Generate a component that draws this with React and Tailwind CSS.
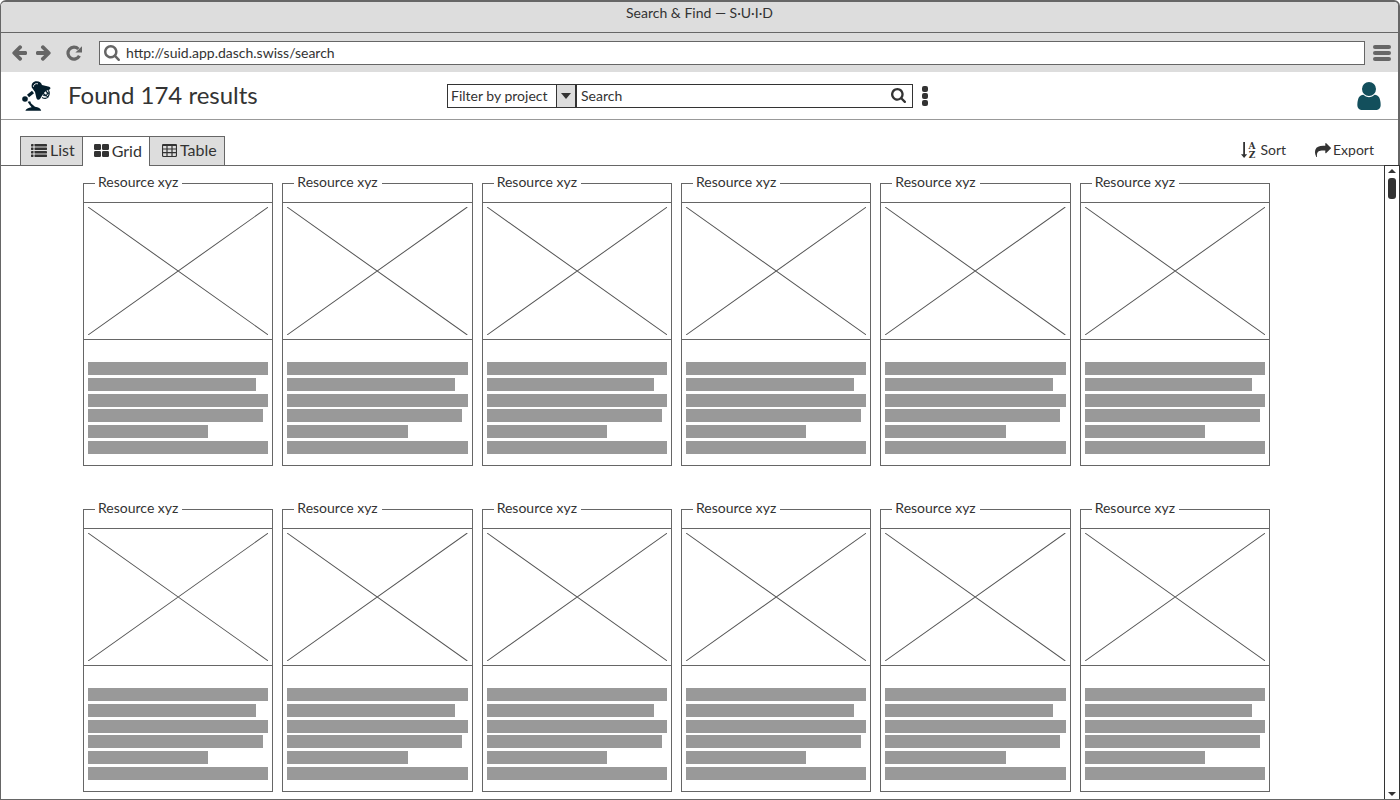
import React from "react";

const PATHS = {
  arrow:
    "M1664 896v128q0 53-32.5 90.5t-84.5 37.5h-704l293 294q38 36 38 90t-38 90l-75 76q-37 37-90 37-52 0-91-37l-651-652q-37-37-37-90 0-52 37-91l651-650q38-38 91-38 52 0 90 38l75 74q38 38 38 91t-38 91l-293 293h704q52 0 84.5 37.5t32.5 90.5z",
  search:
    "M1216 832q0-185-131.5-316.5t-316.5-131.5-316.5 131.5-131.5 316.5 131.5 316.5 316.5 131.5 316.5-131.5 131.5-316.5zm512 832q0 52-38 90t-90 38q-54 0-90-38l-343-342q-179 124-399 124-143 0-273.5-55.5t-225-150-150-225-55.5-273.5 55.5-273.5 150-225 225-150 273.5-55.5 273.5 55.5 225 150 150 225 55.5 273.5q0 220-124 399l343 343q37 37 37 90z",
  user:
    "M1536 1399q0 109-62.5 187t-150.5 78h-854q-88 0-150.5-78t-62.5-187q0-85 8.5-160.5t31.5-152 58.5-131 94-89 134.5-34.5q131 128 313 128t313-128q76 0 134.5 34.5t94 89 58.5 131 31.5 152 8.5 160.5zm-256-887q0 159-112.5 271.5t-271.5 112.5-271.5-112.5-112.5-271.5 112.5-271.5 271.5-112.5 271.5 112.5 112.5 271.5z",
  share:
    "M1792 640q0 26-19 45l-512 512q-19 19-45 19t-45-19-19-45v-256h-224q-98 0-175.5 6t-154 21.5-133 42.5-105.5 69.5-80 101-48.5 138.5-17.5 181q0 55 5 123 0 6 2.5 23.5t2.5 26.5q0 15-8.5 25t-23.5 10q-16 0-28-17-7-9-13-22t-13.5-30-10.5-24q-127-285-127-451 0-199 53-333 162-403 875-403h224v-256q0-26 19-45t45-19 45 19l512 512q19 19 19 45z",
};

function Glyph({ path, viewBox, className }) {
  return (
    <svg viewBox={viewBox} className={className} fill="currentColor" aria-hidden="true">
      <path d={path} />
    </svg>
  );
}

function ReloadIcon() {
  return (
    <svg viewBox="0 0 16 16" className="h-4 w-4" fill="none" aria-hidden="true">
      <path d="M12.4 4 A6 6 0 1 0 13.4 10.8" stroke="currentColor" strokeWidth="3.2" />
      <path d="M16 1.2 V7.4 H9.4 Z" fill="currentColor" />
    </svg>
  );
}

function LampLogo() {
  return (
    <svg viewBox="0 0 32 32" className="h-8 w-8 shrink-0" fill="#031d2b" role="img" aria-label="Desk lamp">
      <circle cx="4" cy="19" r="2.8" />
      <path d="M7 16 L12 12" stroke="#031d2b" strokeWidth="3.2" />
      <path d="M10.8 7.4 C10 3.6 12.2 1.2 15.6 1.2 C18.4 1.2 20.4 2.8 21 5 L28.2 6.8 C30 7.4 29.8 9.2 28.2 9.8 L26 10.6 C23.6 11.6 21.8 14.4 19.2 18.8 C17.8 20.4 16 20 15.4 18 L14 12 Z" />
      <path d="M12.4 6.8 C12.6 4.2 14.6 3.2 17 3.8" fill="none" stroke="#fff" strokeWidth="0.9" />
      <path d="M21 17.4 Q25.4 19.8 27.4 16.2 Q29.2 12.8 27.4 10.2 M22 14.8 Q24.6 17 26.2 14.4 Q26.8 12.8 25.4 11.6 M22 13.2 L27.4 17.4 M24.8 11.2 L28.4 14.2" fill="none" stroke="#031d2b" strokeWidth="1.1" />
      <path d="M6.6 21.8 L9.2 21.2 L10.2 23.4 L14 26.8 C17.4 27.2 19.8 28.6 20.2 30.8 H4.4 C4.8 28.8 7.4 27.6 10.6 27.2 L8.8 25 Z" />
    </svg>
  );
}

function ListIcon() {
  return (
    <svg viewBox="0 0 16 13" className="h-[13px] w-4" fill="currentColor" aria-hidden="true">
      {[0, 3.5, 7, 10.5].map((y) => (
        <g key={y}>
          <rect x="0" y={y} width="2.5" height="2.5" rx="0.4" />
          <rect x="3.5" y={y} width="12.5" height="2.5" rx="0.4" />
        </g>
      ))}
    </svg>
  );
}

function GridIcon() {
  return (
    <svg viewBox="0 0 15 13" className="h-[13px] w-[15px]" fill="currentColor" aria-hidden="true">
      <rect x="0" y="0" width="7" height="6" rx="1.2" />
      <rect x="8" y="0" width="7" height="6" rx="1.2" />
      <rect x="0" y="7" width="7" height="6" rx="1.2" />
      <rect x="8" y="7" width="7" height="6" rx="1.2" />
    </svg>
  );
}

function TableIcon() {
  return (
    <svg viewBox="0 0 15 13" className="h-[13px] w-[15px]" fill="none" stroke="currentColor" strokeWidth="1.2" aria-hidden="true">
      <rect x="0.5" y="0.5" width="14" height="12" rx="1.2" />
      <path d="M0.5 1.5 H14.5 M0.5 5 H14.5 M0.5 8.7 H14.5 M5 1 V12.5 M10 1 V12.5" />
    </svg>
  );
}

function SortIcon() {
  return (
    <svg viewBox="0 0 15 18" className="h-[18px] w-[15px]" fill="currentColor" aria-hidden="true">
      <path d="M2.2 1 H4 V13.2 H6.2 L3.1 17 L0 13.2 H2.2 Z" />
      <text x="11" y="8" textAnchor="middle" className="font-['DejaVu_Serif',serif] text-[9px] font-bold">A</text>
      <text x="11" y="17" textAnchor="middle" className="font-['DejaVu_Serif',serif] text-[9px] font-bold">Z</text>
    </svg>
  );
}

const TABS = [
  { name: "List", Icon: ListIcon },
  { name: "Grid", Icon: GridIcon, active: true },
  { name: "Table", Icon: TableIcon },
];

function Tab({ name, Icon, active }) {
  return (
    <button
      type="button"
      role="tab"
      aria-selected={!!active}
      className={
        active
          ? "flex h-[30px] items-center gap-[3px] border-t border-[#666] bg-white pr-[7px] pb-0.5 pl-[11px]"
          : "flex h-[30px] items-center gap-[3px] border border-[#666] bg-[#ddd] pr-[7px] pb-0.5 pl-2.5 last:pl-3"
      }
    >
      <Icon />
      {name}
    </button>
  );
}

const LINES = ["w-full", "w-[93%]", "w-full", "w-[97%]", "w-2/3", "w-full"];

function ResourceCard() {
  return (
    <article className="h-[283px] border border-[#666]">
      <header className="flex h-[19px] items-start border-b border-[#666]">
        <h2 className="-mt-[11px] ml-[11px] bg-white pr-1 pl-[3px] leading-[18px]">Resource xyz</h2>
      </header>
      <div className="h-[137px] border-b border-[#666] p-1">
        <svg viewBox="0 0 180 128" preserveAspectRatio="none" className="h-full w-full" stroke="#555" role="img" aria-label="Image placeholder">
          <path d="M0 0 L180 128 M180 0 L0 128" />
        </svg>
      </div>
      <div className="mx-1 mt-[22px] flex h-[92px] flex-col justify-between">
        {LINES.map((width, i) => (
          <div key={i} className={`h-[13px] bg-[#999] ${width}`} />
        ))}
      </div>
    </article>
  );
}

export default function App() {
  return (
    <div className="flex min-h-screen flex-col rounded-t-md border-t-2 border-r-2 border-b border-l border-[#666] bg-white font-['Lato','Noto_Sans',sans-serif] text-[14px] text-[#333]">
      <div className="flex h-[31px] items-start justify-center rounded-t border-b border-[#666] bg-[#ddd] pt-0.5">
        <span className="leading-[18px]">Search &amp; Find — S·U·I·D</span>
      </div>
      <div className="flex h-[39px] items-center bg-[#ddd] pr-[7px] pl-2.5 text-[#666]">
        <button type="button" aria-label="Back">
          <Glyph path={PATHS.arrow} viewBox="64 160 1600 1600" className="h-4 w-4" />
        </button>
        <button type="button" aria-label="Forward" className="ml-[9px]">
          <Glyph path={PATHS.arrow} viewBox="64 160 1600 1600" className="h-4 w-4 rotate-180" />
        </button>
        <button type="button" aria-label="Reload" className="ml-3.5">
          <ReloadIcon />
        </button>
        <label className="ml-[17px] flex h-6 flex-1 items-center gap-1.5 border border-[#666] bg-white pl-1">
          <Glyph path={PATHS.search} viewBox="64 128 1664 1664" className="h-4 w-4" />
          <input
            type="text"
            aria-label="Address"
            defaultValue="http://suid.app.dasch.swiss/search"
            className="min-w-0 flex-1 text-[#333] outline-none"
          />
        </label>
        <button type="button" aria-label="Menu" className="ml-2 flex w-[18px] flex-col gap-0.5">
          <span className="h-1 rounded-full bg-[#666]" />
          <span className="h-1 rounded-full bg-[#666]" />
          <span className="h-1 rounded-full bg-[#666]" />
        </button>
      </div>

      <header className="flex h-12 items-center border-b border-[#999]">
        <div className="flex flex-1 items-center gap-[15px] pl-5">
          <LampLogo />
          <h1 className="pb-0.5 text-[24px] leading-7">Found 174 results</h1>
        </div>
        <form className="flex w-[508px] items-center" onSubmit={(e) => e.preventDefault()}>
          <div className="relative h-6 w-[129px]">
            <select aria-label="Filter by project" className="h-full w-full appearance-none border border-[#333] pl-[3px] outline-none">
              <option>Filter by project</option>
            </select>
            <span className="pointer-events-none absolute inset-y-px right-0 flex w-5 items-center justify-center border-x border-[#333] bg-[#ddd]">
              <svg viewBox="0 0 10 6" className="h-1.5 w-2.5" fill="#333" aria-hidden="true">
                <path d="M0 0 H10 L5 6 Z" />
              </svg>
            </span>
          </div>
          <div className="flex h-6 flex-1 items-center border border-[#333] pr-1.5 pl-1">
            <input type="text" aria-label="Search" defaultValue="Search" className="min-w-0 flex-1 outline-none" />
            <button type="submit" aria-label="Run search">
              <Glyph path={PATHS.search} viewBox="64 128 1664 1664" className="h-[15px] w-[15px]" />
            </button>
          </div>
          <button type="button" aria-label="More options" className="mr-[27px] ml-[9px] flex flex-col gap-px">
            <span className="h-1.5 w-1.5 rounded-xs bg-[#333]" />
            <span className="h-1.5 w-1.5 rounded-xs bg-[#333]" />
            <span className="h-1.5 w-1.5 rounded-xs bg-[#333]" />
          </button>
        </form>
        <div className="flex flex-1 justify-end pr-[17px]">
          <button type="button" aria-label="Account" className="text-[#134f5c]">
            <Glyph path={PATHS.user} viewBox="256 128 1280 1536" className="h-7 w-6" />
          </button>
        </div>
      </header>

      <div className="flex h-[46px] items-end border-b border-[#666] pr-6 pl-[19px]">
        <div role="tablist" aria-label="View" className="-mb-px flex text-[16px]">
          {TABS.map((tab) => (
            <Tab key={tab.name} {...tab} />
          ))}
        </div>
        <div className="mb-1.5 ml-auto flex gap-[29px] leading-[18px]">
          <button type="button" className="flex items-center gap-1">
            <SortIcon />
            Sort
          </button>
          <button type="button" className="flex items-center gap-0.5">
            <Glyph path={PATHS.share} viewBox="0 64 1792 1568" className="h-3.5 w-4" />
            Export
          </button>
        </div>
      </div>

      <div className="flex flex-1">
        <main className="grid flex-1 grid-cols-6 content-start gap-x-[9px] gap-y-[43px] pt-[17px] pr-[114px] pb-1.5 pl-[82px]">
          {Array.from({ length: 12 }, (_, i) => (
            <ResourceCard key={i} />
          ))}
        </main>
        <div aria-hidden="true" className="-mt-px -mr-0.5 flex w-4 flex-col items-center border border-b-0 border-[#333] bg-white pt-[3px] pb-[3px]">
          <svg viewBox="0 0 8 4" className="h-1 w-2" fill="#333">
            <path d="M0 4 H8 L4 0 Z" />
          </svg>
          <div className="mt-[5px] h-[21px] w-2 rounded-[3px] bg-[#333]" />
          <svg viewBox="0 0 8 4" className="mt-auto h-1 w-2" fill="#333">
            <path d="M0 0 H8 L4 4 Z" />
          </svg>
        </div>
      </div>
    </div>
  );
}
